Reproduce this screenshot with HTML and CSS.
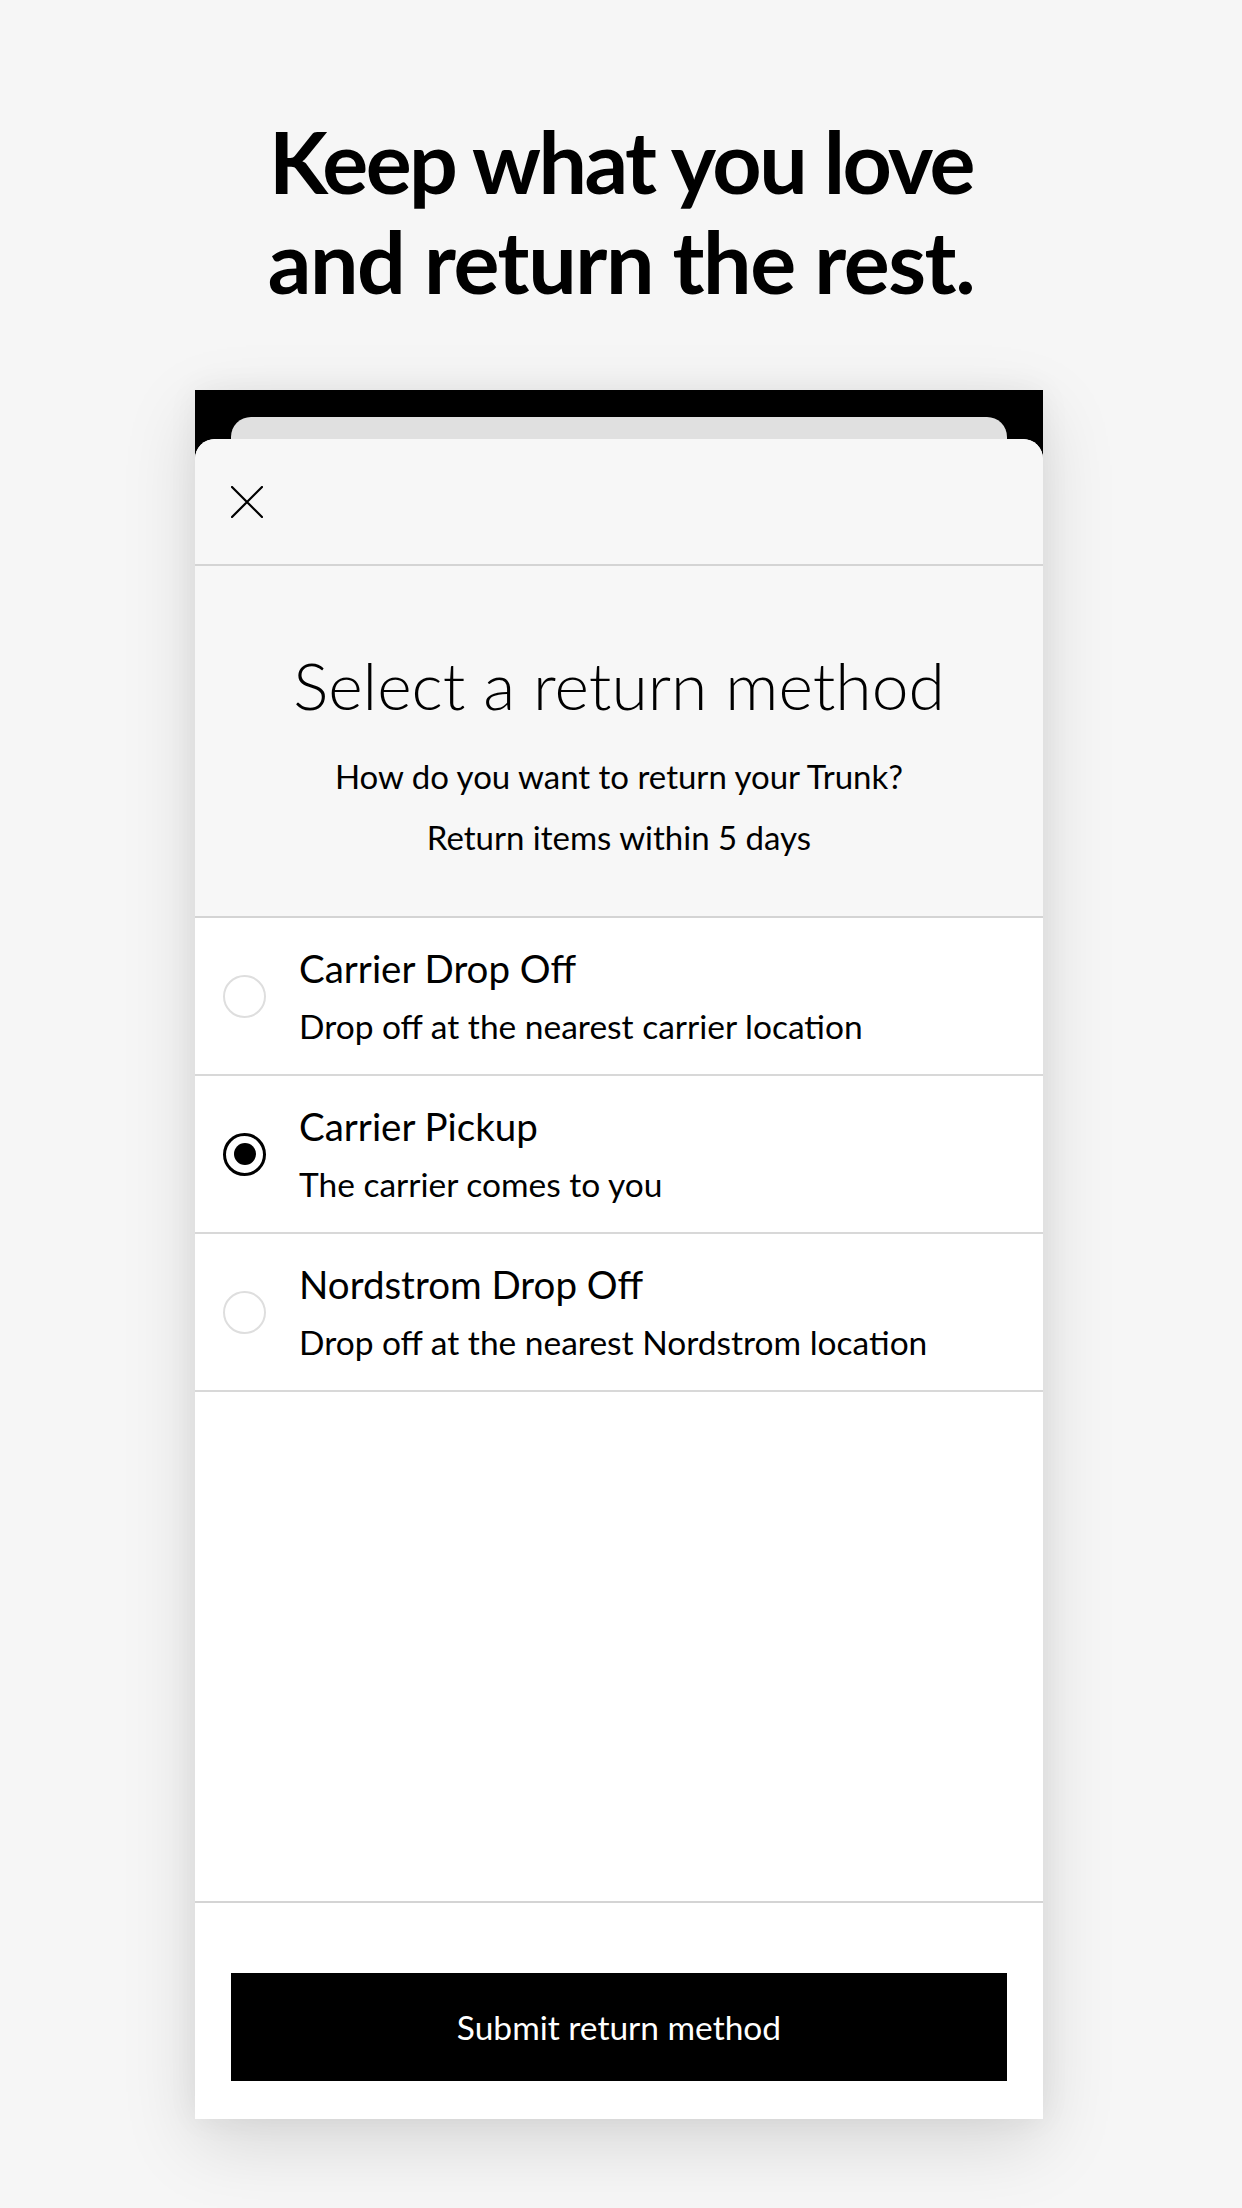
FILE: index.html
```html
<!DOCTYPE html>
<html lang="en">
<head>
<meta charset="utf-8">
<title>Select a return method</title>
<link rel="stylesheet" href="styles.css">
</head>
<body>
<main class="screen">
  <h1 class="hero"><span class="hero-line tight">Keep what you love</span><span class="hero-line">and return the rest.</span></h1>
  <section class="phone">
    <div class="status">
      <div class="back-card"></div>
    </div>
    <div class="sheet">
      <header class="sheet-head">
        <button class="close" aria-label="Close">
          <svg viewBox="0 0 32 32" width="32" height="32"><path d="M1 1 L31 31 M31 1 L1 31" stroke="#000" stroke-width="2.2" fill="none" stroke-linecap="round"/></svg>
        </button>
      </header>
      <div class="intro">
        <h2 class="title">Select a return method</h2>
        <p class="lead">How do you want to return your Trunk?</p>
        <p class="lead">Return items within 5 days</p>
      </div>
      <ul class="options">
        <li class="option">
          <span class="radio"></span>
          <div class="opt-text">
            <div class="opt-title">Carrier Drop Off</div>
            <div class="opt-sub">Drop off at the nearest carrier location</div>
          </div>
        </li>
        <li class="option">
          <span class="radio checked"></span>
          <div class="opt-text">
            <div class="opt-title">Carrier Pickup</div>
            <div class="opt-sub">The carrier comes to you</div>
          </div>
        </li>
        <li class="option">
          <span class="radio"></span>
          <div class="opt-text">
            <div class="opt-title">Nordstrom Drop Off</div>
            <div class="opt-sub">Drop off at the nearest Nordstrom location</div>
          </div>
        </li>
      </ul>
      <div class="spacer"></div>
      <footer class="sheet-foot">
        <button class="submit">Submit return method</button>
      </footer>
    </div>
  </section>
</main>
</body>
</html>
```

FILE: styles.css
```css
* { box-sizing: border-box; }
html, body { margin: 0; padding: 0; }
body {
  width: 1242px;
  height: 2208px;
  background: #f6f6f6;
  font-family: "Lato", "Liberation Sans", sans-serif;
  color: #000;
  overflow: hidden;
}
.screen {
  display: flex;
  flex-direction: column;
  align-items: center;
  padding-top: 111px;
}
.hero {
  margin: 0;
  font-size: 86px;
  line-height: 100px;
  font-weight: 700;
  text-align: center;
  display: flex;
  flex-direction: column;
  align-items: center;
  letter-spacing: -1.4px;
}
.hero-line.tight { letter-spacing: -2.5px; }
.phone {
  margin-top: 79px;
  margin-right: 4px;
  width: 848px;
  height: 1729px;
  background: #000;
  display: flex;
  flex-direction: column;
  box-shadow: 0 24px 70px rgba(0,0,0,0.13), 0 0 30px rgba(0,0,0,0.05);
}
.status {
  height: 49px;
  display: flex;
  flex-direction: column;
  justify-content: flex-end;
  padding: 0 36px;
}
.back-card {
  height: 22px;
  background: #e0e0e0;
  border-radius: 20px 20px 0 0;
}
.sheet {
  flex: 1;
  display: flex;
  flex-direction: column;
  background: #fff;
  border-radius: 20px 20px 0 0;
  overflow: hidden;
}
.sheet-head {
  height: 127px;
  background: #f7f7f7;
  border-bottom: 2px solid #d4d4d4;
  display: flex;
  align-items: center;
  padding-left: 36px;
}
.close {
  border: 0;
  background: none;
  padding: 0;
  width: 32px;
  height: 32px;
  display: block;
}
.close svg { display: block; }
.intro {
  height: 352px;
  background: #f7f7f7;
  border-bottom: 2px solid #d4d4d4;
  display: flex;
  flex-direction: column;
  align-items: center;
  padding-top: 76px;
}
.title {
  margin: 0 0 18px;
  font-size: 66px;
  line-height: 86px;
  font-weight: 300;
}
.lead {
  margin: 0;
  font-size: 33px;
  line-height: 61px;
  font-weight: 400;
}
.options {
  list-style: none;
  margin: 0;
  padding: 0;
  background: #fff;
}
.option {
  height: 158px;
  border-bottom: 2px solid #d8d8d8;
  display: flex;
  align-items: center;
  padding-left: 28px;
}
.radio {
  width: 43px;
  height: 43px;
  border-radius: 50%;
  border: 2px solid #dedede;
  margin-right: 33px;
  flex: none;
  display: flex;
  align-items: center;
  justify-content: center;
}
.radio.checked {
  border: 3px solid #000;
}
.radio.checked::after {
  content: "";
  width: 22px;
  height: 22px;
  border-radius: 50%;
  background: #000;
}
.opt-text {
  display: flex;
  flex-direction: column;
  padding-top: 2px;
}
.opt-title {
  font-size: 38.5px;
  line-height: 58px;
  font-weight: 400;
}
.opt-sub {
  font-size: 33.5px;
  line-height: 58px;
  font-weight: 400;
}
.spacer { flex: 1; background: #fff; }
.sheet-foot {
  height: 218px;
  border-top: 2px solid #d4d4d4;
  background: #fff;
  padding: 70px 36px 0;
}
.submit {
  width: 100%;
  height: 108px;
  background: #000;
  color: #fff;
  border: 0;
  font-family: "Lato", "Liberation Sans", sans-serif;
  font-size: 33.5px;
  font-weight: 400;
}
```
